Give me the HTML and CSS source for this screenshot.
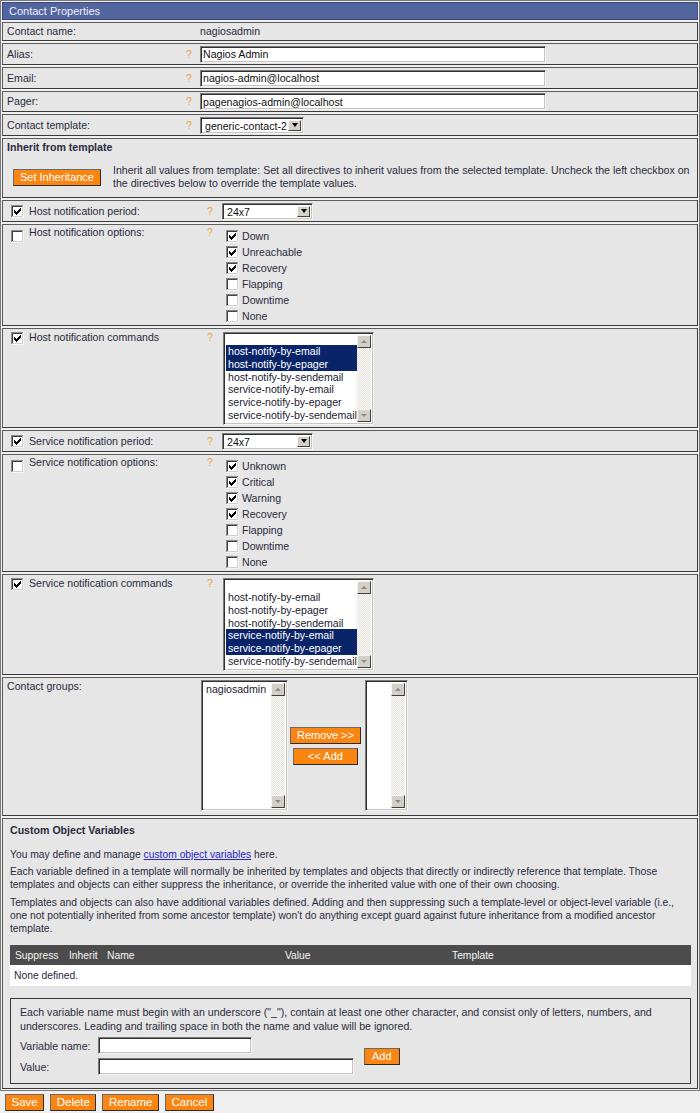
FILE: index.html
```html
<!DOCTYPE html>
<html lang="en">
<head>
<meta charset="utf-8">
<title>Contact Properties</title>
<link rel="stylesheet" href="styles.css">
</head>
<body>
<svg class="defs" width="0" height="0" aria-hidden="true">
  <defs>
    <symbol id="cb-off" viewBox="0 0 13 13">
      <path d="M0 0h13v1H1v12H0z" fill="#8a8a8a"/>
      <path d="M1 1h11v1H2v10H1z" fill="#404040"/>
      <path d="M12 0h1v13H0v-1h12z" fill="#f4f4f4"/>
      <path d="M11 1h1v11H1v-1h10z" fill="#d4d0c8"/>
      <rect x="2" y="2" width="9" height="9" fill="#ffffff"/>
    </symbol>
    <symbol id="cb-on" viewBox="0 0 13 13">
      <path d="M0 0h13v1H1v12H0z" fill="#8a8a8a"/>
      <path d="M1 1h11v1H2v10H1z" fill="#404040"/>
      <path d="M12 0h1v13H0v-1h12z" fill="#f4f4f4"/>
      <path d="M11 1h1v11H1v-1h10z" fill="#d4d0c8"/>
      <rect x="2" y="2" width="9" height="9" fill="#ffffff"/>
      <path d="M3 5h1v3H3z M4 6h1v3H4z M5 7h1v3H5z M6 6h1v3H6z M7 5h1v3H7z M8 4h1v3H8z M9 3h1v3H9z" fill="#000000"/>
    </symbol>
  </defs>
</svg>

<div class="page">
  <div class="panel">
    <div class="title">Contact Properties</div>

    <div class="row plain r-name">
      <span class="lbl">Contact name:</span><span class="help"></span><span class="val">nagiosadmin</span>
    </div>
    <div class="row plain">
      <span class="lbl">Alias:</span><span class="help">?</span><input class="txt w-long" type="text" value="Nagios Admin">
    </div>
    <div class="row plain">
      <span class="lbl">Email:</span><span class="help">?</span><input class="txt w-long" type="text" value="nagios-admin@localhost">
    </div>
    <div class="row plain r-short">
      <span class="lbl">Pager:</span><span class="help">?</span><input class="txt w-long" type="text" value="pagenagios-admin@localhost">
    </div>
    <div class="row plain">
      <span class="lbl">Contact template:</span><span class="help">?</span>
      <div class="select w-tpl"><span class="sel-val">generic-contact-2</span><span class="sel-btn"></span></div>
    </div>

    <div class="row inherit">
      <div class="inh-title">Inherit from template</div>
      <div class="inh-body">
        <button class="btn" type="button">Set Inheritance</button>
        <p>Inherit all values from template: Set all directives to inherit values from the selected template. Uncheck the left checkbox on the directives below to override the template values.</p>
      </div>
    </div>

    <div class="row chk">
      <span class="cbcell"><svg class="cb"><use href="#cb-on"/></svg></span>
      <span class="lbl">Host notification period:</span><span class="help">?</span>
      <div class="select w-per"><span class="sel-val">24x7</span><span class="sel-btn"></span></div>
    </div>

    <div class="row chk r-opts">
      <span class="cbcell"><svg class="cb"><use href="#cb-off"/></svg></span>
      <span class="lbl">Host notification options:</span><span class="help">?</span>
      <ul class="opts">
        <li><svg class="cb"><use href="#cb-on"/></svg>Down</li>
        <li><svg class="cb"><use href="#cb-on"/></svg>Unreachable</li>
        <li><svg class="cb"><use href="#cb-on"/></svg>Recovery</li>
        <li><svg class="cb"><use href="#cb-off"/></svg>Flapping</li>
        <li><svg class="cb"><use href="#cb-off"/></svg>Downtime</li>
        <li><svg class="cb"><use href="#cb-off"/></svg>None</li>
      </ul>
    </div>

    <div class="row chk r-cmds">
      <span class="cbcell"><svg class="cb"><use href="#cb-on"/></svg></span>
      <span class="lbl">Host notification commands</span><span class="help">?</span>
      <div class="listbox lb-cmd">
        <ul class="items">
          <li class="blank"></li>
          <li class="sel">host-notify-by-email</li>
          <li class="sel">host-notify-by-epager</li>
          <li>host-notify-by-sendemail</li>
          <li>service-notify-by-email</li>
          <li>service-notify-by-epager</li>
          <li>service-notify-by-sendemail</li>
        </ul>
        <div class="sb"><span class="sb-btn up"></span><span class="sb-track"></span><span class="sb-btn dn"></span></div>
      </div>
    </div>

    <div class="row chk">
      <span class="cbcell"><svg class="cb"><use href="#cb-on"/></svg></span>
      <span class="lbl">Service notification period:</span><span class="help">?</span>
      <div class="select w-per"><span class="sel-val">24x7</span><span class="sel-btn"></span></div>
    </div>

    <div class="row chk r-opts">
      <span class="cbcell"><svg class="cb"><use href="#cb-off"/></svg></span>
      <span class="lbl">Service notification options:</span><span class="help">?</span>
      <ul class="opts">
        <li><svg class="cb"><use href="#cb-on"/></svg>Unknown</li>
        <li><svg class="cb"><use href="#cb-on"/></svg>Critical</li>
        <li><svg class="cb"><use href="#cb-on"/></svg>Warning</li>
        <li><svg class="cb"><use href="#cb-on"/></svg>Recovery</li>
        <li><svg class="cb"><use href="#cb-off"/></svg>Flapping</li>
        <li><svg class="cb"><use href="#cb-off"/></svg>Downtime</li>
        <li><svg class="cb"><use href="#cb-off"/></svg>None</li>
      </ul>
    </div>

    <div class="row chk r-cmds r-svc">
      <span class="cbcell"><svg class="cb"><use href="#cb-on"/></svg></span>
      <span class="lbl">Service notification commands</span><span class="help">?</span>
      <div class="listbox lb-cmd">
        <ul class="items">
          <li class="blank"></li>
          <li>host-notify-by-email</li>
          <li>host-notify-by-epager</li>
          <li>host-notify-by-sendemail</li>
          <li class="sel">service-notify-by-email</li>
          <li class="sel">service-notify-by-epager</li>
          <li>service-notify-by-sendemail</li>
        </ul>
        <div class="sb"><span class="sb-btn up"></span><span class="sb-track"></span><span class="sb-btn dn"></span></div>
      </div>
    </div>

    <div class="row plain r-groups">
      <span class="lbl">Contact groups:</span><span class="help"></span>
      <div class="groups">
        <div class="listbox lb-left">
          <ul class="items"><li>nagiosadmin</li></ul>
          <div class="sb"><span class="sb-btn up"></span><span class="sb-track"></span><span class="sb-btn dn"></span></div>
        </div>
        <div class="grp-btns">
          <button class="btn b-remove" type="button">Remove &gt;&gt;</button>
          <button class="btn b-add" type="button">&lt;&lt; Add</button>
        </div>
        <div class="listbox lb-right">
          <ul class="items"></ul>
          <div class="sb"><span class="sb-btn up"></span><span class="sb-track"></span><span class="sb-btn dn"></span></div>
        </div>
      </div>
    </div>

    <div class="row cov">
      <div class="cov-title">Custom Object Variables</div>
      <p class="p1">You may define and manage <a href="#">custom object variables</a> here.</p>
      <p class="p2">Each variable defined in a template will normally be inherited by templates and objects that directly or indirectly reference that template. Those templates and objects can either suppress the inheritance, or override the inherited value with one of their own choosing.</p>
      <p class="p3">Templates and objects can also have additional variables defined. Adding and then suppressing such a template-level or object-level variable (i.e., one not potentially inherited from some ancestor template) won't do anything except guard against future inheritance from a modified ancestor template.</p>

      <table class="vars">
        <colgroup><col class="c1"><col class="c2"><col class="c3"><col class="c4"><col></colgroup>
        <thead>
          <tr><th>Suppress</th><th>Inherit</th><th>Name</th><th>Value</th><th>Template</th></tr>
        </thead>
        <tbody>
          <tr><td colspan="5">None defined.</td></tr>
        </tbody>
      </table>

      <div class="newvar">
        <p>Each variable name must begin with an underscore ("_"), contain at least one other character, and consist only of letters, numbers, and underscores. Leading and trailing space in both the name and value will be ignored.</p>
        <div class="nv-form">
          <div class="nv-grid">
            <label for="vn">Variable name:</label><input id="vn" class="txt w-vn" type="text">
            <label for="vv">Value:</label><input id="vv" class="txt w-vv" type="text">
          </div>
          <button class="btn b-nvadd" type="button">Add</button>
        </div>
      </div>
    </div>
  </div>

  <div class="actions">
    <button class="btn act" type="button">Save</button>
    <button class="btn act" type="button">Delete</button>
    <button class="btn act" type="button">Rename</button>
    <button class="btn act" type="button">Cancel</button>
  </div>
</div>
</body>
</html>
```

FILE: styles.css
```css
* { box-sizing: border-box; }
html, body { margin: 0; padding: 0; }
body {
  background: #efefef;
  font-family: "Liberation Sans", Arial, sans-serif;
  font-size: 10.6px;
  line-height: 13px;
  color: #2a2a3c;
}
.defs { position: absolute; width: 0; height: 0; overflow: hidden; }
.page { width: 700px; }

.panel {
  border: 1px solid #7a7a7a;
  padding: 1px;
  background: #f0f0f0;
}
.title {
  height: 18px;
  line-height: 16px;
  padding-left: 6px;
  background: #53659f;
  color: #eef0f8;
  border: 1px solid #3b4a7c;
  font-size: 11px;
}

.row {
  margin-top: 2px;
  background: #e6e6e6;
  border: 1px solid #5c5c5c;
  border-right-color: #3a3a3a;
  border-bottom-color: #3a3a3a;
}

/* plain label / help / control rows */
.plain {
  display: grid;
  grid-template-columns: 176px 17px 1fr;
  align-items: center;
  padding-left: 4px;
  height: 22px;
}
.r-name { height: 19px; }
.r-short { height: 21px; }
.help { color: #f3a13a; padding-left: 3px; }

/* checkbox rows */
.chk {
  display: grid;
  grid-template-columns: 26px 175px 18px 1fr;
  align-items: center;
  height: 22px;
}
.cbcell { padding-left: 8px; display: flex; }
.cb { width: 13px; height: 13px; display: block; flex: none; }

.r-opts, .r-cmds { height: auto; align-items: start; }
.r-opts .lbl, .r-opts .help { padding-top: 1px; }
.r-opts .cbcell { padding-top: 5px; }
.r-cmds { padding-bottom: 2px; }
.r-svc { padding-bottom: 3px; }
.r-cmds .lbl, .r-cmds .help { padding-top: 2px; }
.r-cmds .cbcell { padding-top: 3px; }

.opts { list-style: none; margin: 0; padding: 3px 0 1px; }
.opts li { height: 16px; display: flex; align-items: center; }
.opts .cb { margin: 0 3px 0 4px; }

/* text inputs */
.txt {
  margin: 0;
  height: 17px;
  padding: 0 2px;
  border: 1px solid;
  border-color: #7b7b7b #f4f4f4 #f4f4f4 #7b7b7b;
  box-shadow: inset 1px 1px 0 #303030, inset -1px -1px 0 #c8c5be;
  background: #fff;
  font: inherit;
  color: #111;
  outline: none;
}
.w-long { width: 346px; }

/* drop-down selects */
.select {
  display: flex;
  height: 17px;
  padding: 2px;
  background: #fff;
  border: 1px solid;
  border-color: #7b7b7b #f4f4f4 #f4f4f4 #7b7b7b;
  box-shadow: inset 1px 1px 0 #303030, inset -1px -1px 0 #c8c5be;
}
.w-tpl { width: 104px; }
.w-per { width: 91px; }
.sel-val { flex: 1; padding-left: 2px; line-height: 13px; color: #111; white-space: nowrap; }
.sel-btn {
  width: 13px;
  background: #d4d0c8;
  border: 1px solid;
  border-color: #f4f4f4 #404040 #404040 #f4f4f4;
  display: flex;
  align-items: center;
  justify-content: center;
}
.sel-btn::after {
  content: "";
  border-top: 4px solid #000;
  border-left: 3.5px solid transparent;
  border-right: 3.5px solid transparent;
}

/* inherit block */
.inherit { padding: 2px 0 7px 4px; }
.inh-title { font-weight: bold; }
.inh-body { display: flex; align-items: center; margin-top: 10px; padding-left: 6px; }
.inh-body p { margin: 0 6px 0 12px; }

/* buttons */
.btn {
  margin: 0;
  height: 17px;
  padding: 0 6px;
  background: #fb8511;
  color: #fff;
  border: 1px solid;
  border-color: #6a6a6a #2c2c2c #2c2c2c #6a6a6a;
  font-family: inherit;
  font-size: 11px;
  line-height: 15px;
  white-space: nowrap;
  flex: none;
}
.act { font-size: 11.5px; padding: 0 5.5px; }

/* list boxes */
.listbox {
  display: flex;
  padding: 2px;
  background: #fff;
  border: 1px solid;
  border-color: #7b7b7b #f4f4f4 #f4f4f4 #7b7b7b;
  box-shadow: inset 1px 1px 0 #303030, inset -1px -1px 0 #c8c5be;
}
.lb-cmd { width: 151px; height: 93px; margin-left: 1px; margin-top: 3px; }
.items { flex: 1; list-style: none; margin: 0; padding: 0; overflow: hidden; }
.items li { height: 12.8px; line-height: 12.8px; padding-left: 2px; white-space: nowrap; color: #1c1c30; }
.items li.blank { height: 10px; }
.items li.sel { background: #0a246a; color: #fff; }
.sb { width: 14px; display: flex; flex-direction: column; flex: none; }
.sb-btn {
  height: 13px;
  background: #d4d0c8;
  border: 1px solid;
  border-color: #f4f4f4 #404040 #404040 #f4f4f4;
  display: flex;
  align-items: center;
  justify-content: center;
  flex: none;
}
.sb-btn.up::after {
  content: "";
  border-bottom: 3px solid #8a8a8a;
  border-left: 3.5px solid transparent;
  border-right: 3.5px solid transparent;
}
.sb-btn.dn::after {
  content: "";
  border-top: 3px solid #8a8a8a;
  border-left: 3.5px solid transparent;
  border-right: 3.5px solid transparent;
}
.sb-track {
  flex: 1;
  background: repeating-conic-gradient(#fbfbf9 0 25%, #e6e3dc 0 50%) 0 0 / 2px 2px;
}

/* contact groups */
.r-groups { height: auto; align-items: start; padding-bottom: 4px; }
.r-groups .lbl { padding-top: 2px; }
.groups { display: flex; padding-top: 2px; margin-left: 1px; }
.lb-left { width: 87px; height: 131px; }
.lb-right { width: 43px; height: 131px; margin-left: 4px; }
.grp-btns { width: 71px; margin-left: 2px; display: flex; flex-direction: column; align-items: center; justify-content: center; gap: 4px; }
.b-remove { width: 71px; }
.b-add { width: 65px; }

/* custom object variables */
.cov { padding: 0 6px 4px 7px; }
.cov-title { font-weight: bold; margin-top: 5px; }
.cov p { margin: 0; font-size: 10.3px; }
.cov .p1 { margin-top: 11px; }
.cov .p2 { margin-top: 4px; }
.cov .p3 { margin-top: 5px; }
.cov a { color: #2525c8; text-decoration: underline; }

.vars { width: 100%; margin-top: 10px; border-collapse: collapse; table-layout: fixed; }
.vars .c1 { width: 54px; }
.vars .c2 { width: 38px; }
.vars .c3 { width: 178px; }
.vars .c4 { width: 167px; }
.vars th {
  height: 20px;
  padding: 0 0 0 5px;
  background: #4c4c4c;
  color: #f6f6f6;
  font-weight: normal;
  text-align: left;
  font-size: 10.3px;
}
.vars td { height: 21px; padding: 0 0 0 4px; background: #fff; font-size: 10.3px; }

.newvar {
  margin-top: 12px;
  border: 1px solid #3a3a3a;
  padding: 6px 9px 8px;
  line-height: 14px;
}
.cov .newvar p { font-size: 10.6px; }
.nv-form { display: flex; align-items: center; margin-top: 4px; }
.nv-grid { display: grid; grid-template-columns: 78px 256px; row-gap: 4px; align-items: center; }
.w-vn { width: 154px; }
.w-vv { width: 256px; }
.b-nvadd { margin-left: 10px; padding: 0 7px; }

.actions { display: flex; gap: 6px; padding: 3px 0 0 5px; }
```
